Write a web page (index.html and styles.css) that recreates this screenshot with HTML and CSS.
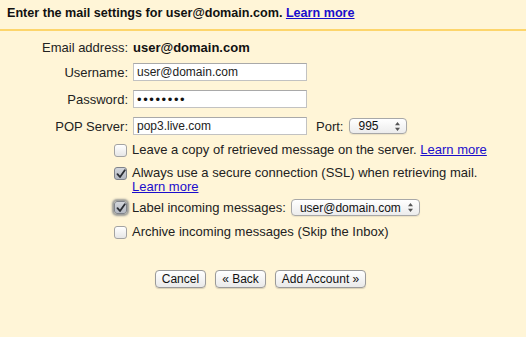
FILE: index.html
```html
<!DOCTYPE html>
<html lang="en">
<head>
    <meta charset="UTF-8">
    <title>Add a mail account</title>
    <link rel="stylesheet" href="styles.css">
</head>
<body>
    <div class="dialog">
        <!-- Header -->
        <div class="dialog-header">
            Enter the mail settings for user@domain.com. <a href="#" class="link">Learn more</a>
        </div>

        <!-- Account fields -->
        <div class="fields">
            <div class="field-row email-row">
                <span class="field-label">Email address:</span>
                <span class="email-value">user@domain.com</span>
            </div>
            <div class="field-row">
                <label class="field-label" for="username">Username:</label>
                <input class="text-input" type="text" id="username" value="user@domain.com">
            </div>
            <div class="field-row">
                <label class="field-label" for="password">Password:</label>
                <input class="text-input password" type="text" id="password" value="••••••••">
            </div>
            <div class="field-row">
                <label class="field-label" for="server">POP Server:</label>
                <input class="text-input" type="text" id="server" value="pop3.live.com">
                <span class="port-label">Port:</span>
                <span class="select port-select">
                    995
                    <svg class="select-arrows" width="5" height="9" viewBox="0 0 5 9"><path d="M2.5 0 L5 3.2 H0 Z M2.5 9 L5 5.8 H0 Z" fill="#555"/></svg>
                </span>
            </div>
        </div>

        <!-- Options -->
        <div class="options">
            <div class="option">
                <span class="checkbox"></span>
                <span class="option-text">Leave a copy of retrieved message on the server. <a href="#" class="link">Learn more</a></span>
            </div>
            <div class="option">
                <span class="checkbox checked">
                    <svg width="10" height="10" viewBox="0 0 10 10"><path d="M1.5 5.2 L4 8 L8.8 1.2" fill="none" stroke="#2a2d33" stroke-width="1.8" stroke-linecap="round" stroke-linejoin="round"/></svg>
                </span>
                <span class="option-text">Always use a secure connection (SSL) when retrieving mail.<br><a href="#" class="link">Learn more</a></span>
            </div>
            <div class="option option-select">
                <span class="checkbox checked focused">
                    <svg width="10" height="10" viewBox="0 0 10 10"><path d="M1.5 5.2 L4 8 L8.8 1.2" fill="none" stroke="#2a2d33" stroke-width="1.8" stroke-linecap="round" stroke-linejoin="round"/></svg>
                </span>
                <span class="option-text">Label incoming messages:</span>
                <span class="select label-select">
                    user@domain.com
                    <svg class="select-arrows" width="5" height="9" viewBox="0 0 5 9"><path d="M2.5 0 L5 3.2 H0 Z M2.5 9 L5 5.8 H0 Z" fill="#555"/></svg>
                </span>
            </div>
            <div class="option">
                <span class="checkbox"></span>
                <span class="option-text">Archive incoming messages (Skip the Inbox)</span>
            </div>
        </div>

        <!-- Buttons -->
        <div class="buttons">
            <button class="btn">Cancel</button>
            <button class="btn">« Back</button>
            <button class="btn">Add Account »</button>
        </div>
    </div>
</body>
</html>
```

FILE: styles.css
```css
/* Base Styles */
* {
    box-sizing: border-box;
    margin: 0;
    padding: 0;
}

body {
    font-family: 'Liberation Sans', Arial, sans-serif;
    font-size: 13px;
    color: #222222;
    background: #fff5d7;
    height: 337px;
    overflow: hidden;
}

.link {
    color: #1a0dcc;
    text-decoration: underline;
}

/* Header */
.dialog-header {
    height: 31px;
    padding: 6px 7px 0;
    font-weight: bold;
    font-size: 12.6px;
    color: #111111;
    border-bottom: 2px solid #fdd56b;
}

/* Account fields */
.fields {
    display: flex;
    flex-direction: column;
    gap: 9px;
    padding-top: 6px;
}

.field-row {
    display: flex;
    align-items: center;
    height: 18px;
}

.email-row {
    height: 20px;
    margin-bottom: -3px;
}

.field-label {
    width: 133px;
    text-align: right;
    padding-right: 5px;
    flex: none;
    color: #222222;
}

.email-value {
    font-weight: bold;
    color: #111111;
}

.text-input {
    width: 174px;
    height: 18px;
    border: 1px solid #c2c2c2;
    border-top-color: #a9a9a9;
    background: #ffffff;
    font-family: 'Liberation Sans', Arial, sans-serif;
    font-size: 12px;
    color: #222222;
    padding: 0 3px;
    outline: none;
}

.text-input.password {
    font-size: 13px;
    letter-spacing: 1.6px;
    color: #111111;
}

.port-label {
    margin-left: 9px;
    margin-right: 6px;
}

/* Native-looking select */
.select {
    display: inline-flex;
    align-items: center;
    justify-content: space-between;
    height: 16px;
    padding: 0 6px 0 8px;
    border: 1px solid #a8a8a8;
    border-radius: 4px;
    background: linear-gradient(#ffffff, #ececec);
    font-size: 12px;
    color: #111111;
    box-shadow: 0 1px 1px rgba(0, 0, 0, 0.08);
}

.port-select {
    width: 58px;
}

.label-select {
    width: 129px;
    height: 17px;
    margin-left: 5px;
}

/* Options */
.options {
    display: flex;
    flex-direction: column;
    gap: 9px;
    padding-left: 114px;
    margin-top: 8px;
}

.option {
    display: flex;
    align-items: flex-start;
    line-height: 14px;
}

.option-select {
    align-items: center;
    margin-top: -4px;
}

.checkbox {
    width: 13px;
    height: 13px;
    flex: none;
    margin-right: 5px;
    margin-top: 1px;
    border: 1px solid #a3a3a3;
    border-radius: 3px;
    background: linear-gradient(#ffffff, #e6e6e6);
    display: flex;
    align-items: center;
    justify-content: center;
}

.checkbox.checked {
    background: linear-gradient(#d3d6dc, #b3b8c1);
    border-color: #7f838b;
}

.checkbox.focused {
    box-shadow: 0 0 2px 2px rgba(70, 80, 100, 0.55);
}

.option-select .checkbox {
    margin-top: 0;
}

/* Buttons */
.buttons {
    display: flex;
    justify-content: center;
    gap: 9px;
    margin-top: 31px;
    padding-right: 5px;
}

.btn {
    height: 18px;
    padding: 0 6px;
    font-family: 'Liberation Sans', Arial, sans-serif;
    font-size: 12px;
    color: #111111;
    border: 1px solid #9a9a9a;
    border-radius: 4px;
    background: linear-gradient(#ffffff, #e9e9e9);
    box-shadow: 0 1px 1px rgba(0, 0, 0, 0.15);
    cursor: pointer;
}
```
